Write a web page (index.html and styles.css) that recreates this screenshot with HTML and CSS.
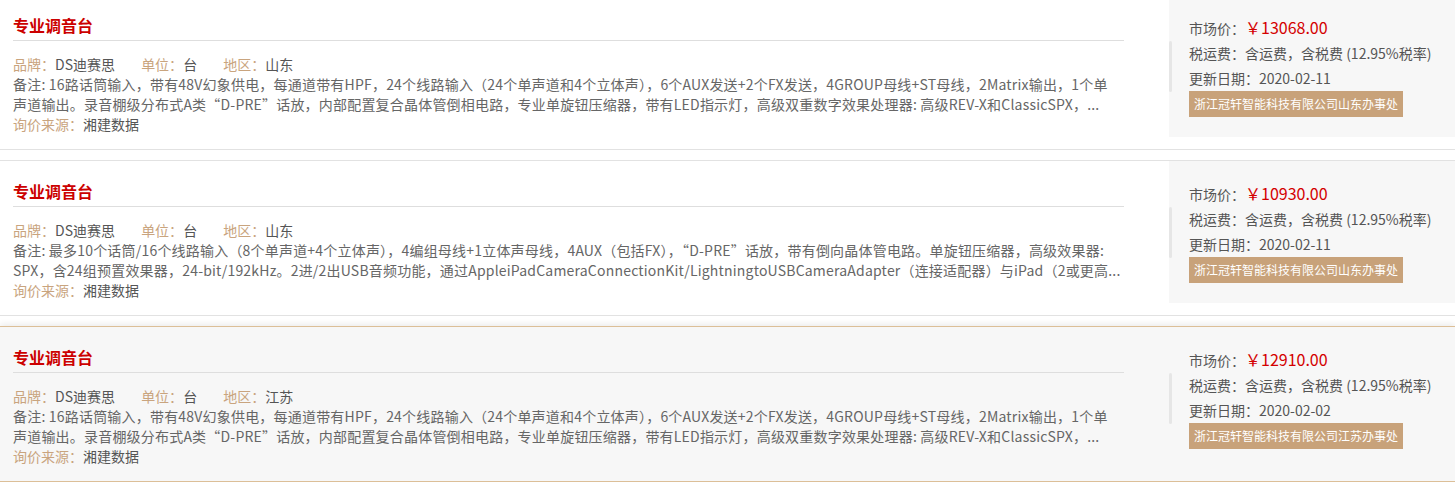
FILE: index.html
```html
<!DOCTYPE html>
<html lang="zh-CN">
<head>
    <meta charset="UTF-8">
    <title>专业调音台 - 询价</title>
    <link rel="stylesheet" href="styles.css">
</head>
<body>
    <div class="price-list">
        <div class="price-item">
            <div class="item-main">
                <h3 class="item-title">专业调音台</h3>
                <div class="item-attrs">
                    <span><em>品牌：</em>DS迪赛思</span>
                    <span><em>单位：</em>台</span>
                    <span><em>地区：</em>山东</span>
                </div>
                <div class="item-desc">
                    <span>备注: 16路话筒输入，带有48V幻象供电，每通道带有HPF，24个线路输入（24个单声道和4个立体声），6个AUX发送+2个FX发送，4GROUP母线+ST母线，2Matrix输出，1个单</span>
                    <span>声道输出。录音棚级分布式A类“D-PRE”话放，内部配置复合晶体管倒相电路，专业单旋钮压缩器，带有LED指示灯，高级双重数字效果处理器: 高级REV-X和ClassicSPX，...</span>
                </div>
                <div class="item-source"><em>询价来源：</em>湘建数据</div>
            </div>
            <div class="item-side">
                <span class="side-bar"></span>
                <div class="side-info">
                    <div class="side-line">市场价：<span class="price">￥13068.00</span></div>
                    <div class="side-line">税运费：含运费，含税费 (12.95%税率)</div>
                    <div class="side-line">更新日期：2020-02-11</div>
                    <span class="company">浙江冠轩智能科技有限公司山东办事处</span>
                </div>
            </div>
        </div>

        <div class="price-item">
            <div class="item-main">
                <h3 class="item-title">专业调音台</h3>
                <div class="item-attrs">
                    <span><em>品牌：</em>DS迪赛思</span>
                    <span><em>单位：</em>台</span>
                    <span><em>地区：</em>山东</span>
                </div>
                <div class="item-desc">
                    <span>备注: 最多10个话筒/16个线路输入（8个单声道+4个立体声），4编组母线+1立体声母线，4AUX（包括FX），“D-PRE”话放，带有倒向晶体管电路。单旋钮压缩器，高级效果器:</span>
                    <span>SPX，含24组预置效果器，24-bit/192kHz。2进/2出USB音频功能，通过AppleiPadCameraConnectionKit/LightningtoUSBCameraAdapter（连接适配器）与iPad（2或更高...</span>
                </div>
                <div class="item-source"><em>询价来源：</em>湘建数据</div>
            </div>
            <div class="item-side">
                <span class="side-bar"></span>
                <div class="side-info">
                    <div class="side-line">市场价：<span class="price">￥10930.00</span></div>
                    <div class="side-line">税运费：含运费，含税费 (12.95%税率)</div>
                    <div class="side-line">更新日期：2020-02-11</div>
                    <span class="company">浙江冠轩智能科技有限公司山东办事处</span>
                </div>
            </div>
        </div>

        <div class="price-item active">
            <div class="item-main">
                <h3 class="item-title">专业调音台</h3>
                <div class="item-attrs">
                    <span><em>品牌：</em>DS迪赛思</span>
                    <span><em>单位：</em>台</span>
                    <span><em>地区：</em>江苏</span>
                </div>
                <div class="item-desc">
                    <span>备注: 16路话筒输入，带有48V幻象供电，每通道带有HPF，24个线路输入（24个单声道和4个立体声），6个AUX发送+2个FX发送，4GROUP母线+ST母线，2Matrix输出，1个单</span>
                    <span>声道输出。录音棚级分布式A类“D-PRE”话放，内部配置复合晶体管倒相电路，专业单旋钮压缩器，带有LED指示灯，高级双重数字效果处理器: 高级REV-X和ClassicSPX，...</span>
                </div>
                <div class="item-source"><em>询价来源：</em>湘建数据</div>
            </div>
            <div class="item-side">
                <span class="side-bar"></span>
                <div class="side-info">
                    <div class="side-line">市场价：<span class="price">￥12910.00</span></div>
                    <div class="side-line">税运费：含运费，含税费 (12.95%税率)</div>
                    <div class="side-line">更新日期：2020-02-02</div>
                    <span class="company">浙江冠轩智能科技有限公司江苏办事处</span>
                </div>
            </div>
        </div>
    </div>
</body>
</html>
```

FILE: styles.css
```css
body {
    margin: 0;
    padding: 0;
    background: #fff;
    font-family: "Noto Sans CJK SC", "Liberation Sans", sans-serif;
    font-size: 14px;
    color: #555;
}

.price-list {
    margin-top: -6px;
}

.price-item {
    display: flex;
    align-items: flex-start;
    height: 154px;
    border-top: 1px solid #e2e2e2;
    border-bottom: 1px solid #e2e2e2;
    margin-bottom: 10px;
    background: #fff;
}
.price-item.active {
    background: #f7f7f7;
    border-color: #dcbf98;
    box-shadow: 0 -2px 6px rgba(0, 0, 0, 0.08);
}

.item-main {
    width: 1111px;
    padding: 0 45px 0 13px;
}
.item-title {
    margin: 0;
    padding: 19px 0 4px;
    font-size: 16px;
    line-height: 22px;
    font-weight: bold;
    color: #cc0000;
    border-bottom: 1px solid #dedede;
}
.item-attrs {
    margin-top: 13px;
    line-height: 20px;
}
.item-attrs span {
    margin-right: 23px;
}
em {
    font-style: normal;
    color: #c9a47e;
}
.item-desc {
    line-height: 20px;
    color: #666;
    letter-spacing: 0.2px;
}
.item-desc span {
    display: block;
    white-space: nowrap;
    overflow: hidden;
}
.item-source {
    line-height: 20px;
}

.item-side {
    width: 286px;
    height: 142px;
    background: #f7f7f7;
    display: flex;
    align-items: center;
}
.side-bar {
    width: 3px;
    height: 51px;
    border-radius: 2px;
    background: #e6e6e6;
}
.side-info {
    margin-left: 17px;
}
.side-line {
    line-height: 25px;
    white-space: nowrap;
}
.price {
    font-size: 16px;
    color: #d40000;
}
.company {
    display: inline-block;
    padding: 0 5px;
    height: 26px;
    line-height: 26px;
    font-size: 12px;
    color: #fff;
    background: #c8a27a;
}
```
